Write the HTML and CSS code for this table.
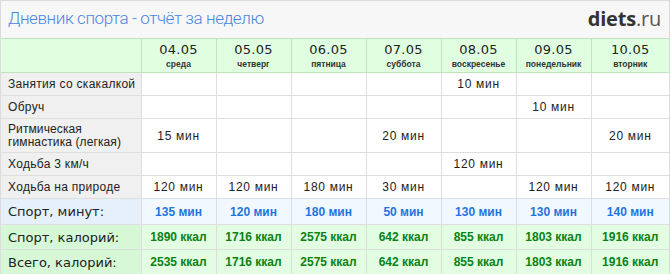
FILE: index.html
```html
<!DOCTYPE html>
<html lang="ru">
<head>
<meta charset="utf-8">
<link rel="stylesheet" href="styles.css">
</head>
<body>
<div class="page">
  <div class="top">
    <h1 class="title">Дневник спорта - отчёт за неделю</h1>
    <div class="logo"><b>diets</b>.ru</div>
  </div>
  <table class="grid">
    <colgroup>
      <col class="c-label"><col class="c-day"><col class="c-day"><col class="c-day"><col class="c-day"><col class="c-day"><col class="c-day"><col>
    </colgroup>
    <thead>
      <tr class="head">
        <th></th>
        <th><span class="date">04.05</span><span class="dow">среда</span></th>
        <th><span class="date">05.05</span><span class="dow">четверг</span></th>
        <th><span class="date">06.05</span><span class="dow">пятница</span></th>
        <th><span class="date">07.05</span><span class="dow">суббота</span></th>
        <th><span class="date">08.05</span><span class="dow">воскресенье</span></th>
        <th><span class="date">09.05</span><span class="dow">понедельник</span></th>
        <th><span class="date">10.05</span><span class="dow">вторник</span></th>
      </tr>
    </thead>
    <tbody>
      <tr class="r">
        <td class="lbl">Занятия со скакалкой</td>
        <td></td><td></td><td></td><td></td><td>10 мин</td><td></td><td></td>
      </tr>
      <tr class="r">
        <td class="lbl">Обруч</td>
        <td></td><td></td><td></td><td></td><td></td><td>10 мин</td><td></td>
      </tr>
      <tr class="r tall">
        <td class="lbl">Ритмическая<br>гимнастика (легкая)</td>
        <td>15 мин</td><td></td><td></td><td>20 мин</td><td></td><td></td><td>20 мин</td>
      </tr>
      <tr class="r">
        <td class="lbl">Ходьба 3 км/ч</td>
        <td></td><td></td><td></td><td></td><td>120 мин</td><td></td><td></td>
      </tr>
      <tr class="r">
        <td class="lbl">Ходьба на природе</td>
        <td>120 мин</td><td>120 мин</td><td>180 мин</td><td>30 мин</td><td></td><td>120 мин</td><td>120 мин</td>
      </tr>
      <tr class="sum min">
        <td class="lbl">Спорт, минут:</td>
        <td>135 мин</td><td>120 мин</td><td>180 мин</td><td>50 мин</td><td>130 мин</td><td>130 мин</td><td>140 мин</td>
      </tr>
      <tr class="sum kcal">
        <td class="lbl">Спорт, калорий:</td>
        <td>1890 ккал</td><td>1716 ккал</td><td>2575 ккал</td><td>642 ккал</td><td>855 ккал</td><td>1803 ккал</td><td>1916 ккал</td>
      </tr>
      <tr class="sum kcal last">
        <td class="lbl">Всего, калорий:</td>
        <td>2535 ккал</td><td>1716 ккал</td><td>2575 ккал</td><td>642 ккал</td><td>855 ккал</td><td>1803 ккал</td><td>1916 ккал</td>
      </tr>
    </tbody>
  </table>
</div>
</body>
</html>
```

FILE: styles.css
```css
html, body {
  margin: 0;
  padding: 0;
  background: #ffffff;
}

.page {
  width: 670px;
  height: 274px;
  box-sizing: border-box;
  border: 1px solid #dcdcdc;
  border-bottom: none;
  background: #f7f7f7;
  font-family: "Liberation Sans", Arial, sans-serif;
}

.top {
  height: 37px;
  box-sizing: border-box;
  display: flex;
  align-items: center;
  justify-content: space-between;
  padding: 0 8px 3px 7px;
}

.title {
  margin: 0;
  font-family: Roboto, sans-serif;
  font-weight: 300;
  font-size: 17px;
  letter-spacing: -0.4px;
  color: #4a86e0;
}

.logo {
  font-family: "Open Sans", sans-serif;
  font-size: 20px;
  color: #555;
  letter-spacing: -0.2px;
}

.logo b {
  font-weight: 700;
  color: #333;
}

.grid {
  width: 668px;
  border-collapse: collapse;
  table-layout: fixed;
}

.c-label { width: 140px; }
.c-day { width: 75px; }

.grid th, .grid td {
  padding: 0;
  border: 1px solid #dedede;
  text-align: center;
  vertical-align: middle;
  white-space: nowrap;
}

.grid tr > :first-child { border-left: none; }
.grid tr > :last-child { border-right: none; }

.head th {
  height: 33px;
  background: #e0ffe0;
  border-color: #bfe3bf;
  font-weight: 400;
  color: #222;
}

.date {
  display: block;
  font-family: "DejaVu Sans", sans-serif;
  font-size: 13px;
  letter-spacing: 0.3px;
  line-height: 16px;
}

.dow {
  display: block;
  font-family: "Liberation Sans", Arial, sans-serif;
  font-size: 8.5px;
  font-weight: 700;
  color: #333;
  line-height: 12px;
}

.r td {
  height: 22px;
  background: #ffffff;
  font-size: 12px;
  letter-spacing: 0.7px;
  color: #222;
}

.r.tall td { height: 33px; }

.r td.lbl {
  background: #f0f0f0;
  text-align: left;
  padding-left: 7px;
  line-height: 13px;
  letter-spacing: 0.3px;
}

.r.tall td.lbl { letter-spacing: 0.1px; }

.sum td {
  font-size: 12px;
  font-weight: 700;
}

.sum td.lbl {
  text-align: left;
  padding-left: 7px;
  font-family: "DejaVu Sans", sans-serif;
  font-weight: 400;
  font-size: 13px;
  letter-spacing: 0;
  color: #222;
}

.min td {
  height: 25px;
  background: #f2f8ff;
  color: #1f74e0;
}

.min td.lbl { background: #e6f0fa; }

.kcal td {
  height: 24px;
  background: #e2fde2;
  color: #0a8214;
}

.kcal td.lbl { background: #d6f8d6; }
```
